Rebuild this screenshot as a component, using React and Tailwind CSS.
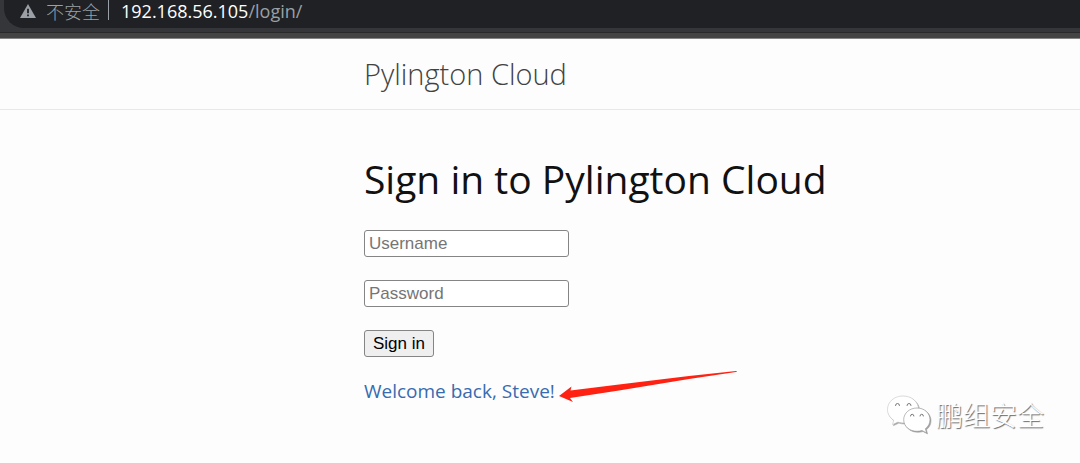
function WarningIcon() {
  return (
    <svg viewBox="0 0 16 14" className="h-3.5 w-4 shrink-0" aria-hidden="true">
      <path d="M8 0 L16 14 H0 Z" fill="#9aa0a6" />
      <path d="M7.1 4.8h1.8v4.4H7.1zM7.1 10.4h1.8v1.8H7.1z" fill="#202124" />
    </svg>
  );
}

function AddressBar() {
  return (
    <div className="border-b border-[#858585] bg-[#35363a]">
      <div className="ml-1 flex h-7 items-start rounded-bl-[20px] bg-[#202124] pl-4 text-lg leading-[22px] text-[#9aa0a6]">
        <span className="flex h-[22px] items-center">
          <WarningIcon />
        </span>
        <span className="ml-2.5 whitespace-nowrap font-['Noto_Sans_CJK_SC',sans-serif] font-light">不安全</span>
        <span className="ml-2 h-5 w-px bg-[#9aa0a6]" />
        <span className="ml-3 font-['Open_Sans',sans-serif] whitespace-nowrap">
          <span className="text-white">192.168.56.105</span>/login/
        </span>
      </div>
      <div className="mt-1 h-1.5 border-t border-[#28292b] bg-[#444444]" />
    </div>
  );
}

function Arrow() {
  return (
    <svg viewBox="0 0 182 36" className="h-9 w-[182px] shrink-0" aria-hidden="true">
      <path
        d="M0 29 L12.5 19.5 L11.5 23.5 L60 17.5 L130 9 L177 4 Q179 4.5 177 5.1 L130 12 L60 23.5 L11 31 L14 35 Z"
        fill="#ff2212"
      />
    </svg>
  );
}

function WeChatIcon() {
  return (
    <svg viewBox="0 0 46 40" className="h-10 w-[46px] shrink-0 drop-shadow-[1px_1px_0px_#a3a3a3]" aria-hidden="true">
      <g fill="#ffffff" stroke="#c4c4c4" strokeWidth="0.6" strokeLinejoin="round">
        <path d="M17 1 C8 1 1.5 7 1.5 14.5 C1.5 19 3.9 22.7 7.7 25.3 L6.5 29.6 L11.9 27.1 C13.4 27.6 15 27.9 17 27.9 C26 27.9 32.5 22 32.5 14.5 C32.5 7 26 1 17 1 Z" />
        <path
          d="M31 13 C23.5 13 17.7 18.2 17.7 24.7 C17.7 31.3 23.5 36.3 31 36.3 C32.8 36.3 34.4 36 36 35.5 L40.6 37.9 L39.4 33.7 C42.4 31.5 44 28.4 44 24.7 C44 18.2 38.5 13 31 13 Z"
          stroke="#8c8c8c"
        />
      </g>
      <g fill="none" stroke="#777777" strokeWidth="1" strokeLinecap="round">
        <path d="M9.5 10.5 a2 2 0 0 1 4 0" />
        <path d="M21 10.5 a2 2 0 0 1 4 0" />
        <path d="M24.5 21 a1.7 1.7 0 0 1 3.4 0" />
        <path d="M34 21 a1.7 1.7 0 0 1 3.4 0" />
      </g>
    </svg>
  );
}

const fieldClass =
  "block h-[27px] w-[205px] rounded-[3px] border border-[#858585] bg-white px-1 font-['Liberation_Sans',Arial,sans-serif] text-[17px] placeholder:text-[#757575]";

export default function App() {
  return (
    <div className="relative min-h-screen bg-[#fdfdfd] font-['Open_Sans','Noto_Sans',sans-serif]">
      <AddressBar />
      <header className="border-b border-[#e8e8e8] pl-[33.7%]">
        <a href="#" className="block text-[29px] leading-[70px] font-light whitespace-nowrap text-[#424242]">
          Pylington Cloud
        </a>
      </header>
      <main className="pt-10 pl-[33.7%]">
        <h1 className="text-[39px] leading-[58px] whitespace-nowrap text-[#111111]">Sign in to Pylington Cloud</h1>
        <form className="mt-[22px] flex flex-col items-start gap-[23px]" onSubmit={(e) => e.preventDefault()}>
          <input type="text" aria-label="Username" placeholder="Username" className={fieldClass} />
          <input type="password" aria-label="Password" placeholder="Password" className={fieldClass} />
          <button
            type="submit"
            className="h-[27px] rounded-[3px] border border-[#858585] bg-[#efefef] px-2 font-['Liberation_Sans',Arial,sans-serif] text-[17px] leading-6 text-black"
          >
            Sign in
          </button>
        </form>
        <div className="mt-2.5 flex items-start gap-1">
          <p className="mt-2.5 text-[19px] leading-7 whitespace-nowrap text-[#386bb0]">Welcome back, Steve!</p>
          <Arrow />
        </div>
      </main>
      <div className="absolute right-9 bottom-7 flex items-center gap-1">
        <WeChatIcon />
        <span className="font-['Noto_Sans_CJK_SC',sans-serif] text-[27px] leading-10 font-light whitespace-nowrap text-white [text-shadow:1px_1px_1px_#666666]">
          鹏组安全
        </span>
      </div>
    </div>
  );
}
